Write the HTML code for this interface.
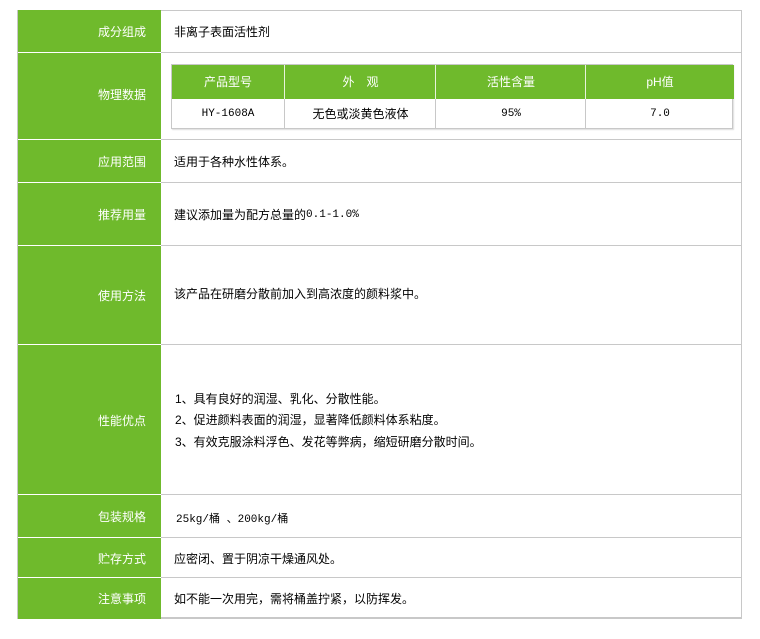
<!DOCTYPE html>
<html><head><meta charset="utf-8"><style>
body{margin:0;background:#fff;width:760px;height:639px;position:relative;font-family:"Liberation Sans","Noto Sans CJK SC",sans-serif;font-size:12px;color:#000;}
.outer{position:absolute;left:17px;top:10px;width:725px;height:609px;border:1px solid #c8c8c8;border-bottom:2px solid #c8c8c8;box-sizing:border-box;}
.row{position:absolute;left:17px;width:725px;border-top:1px solid #c8c8c8;box-sizing:border-box;}
.lab{position:absolute;left:1px;top:0;width:143px;bottom:0;background:#6fba2c;color:#fff;text-align:right;padding-right:15px;box-sizing:border-box;display:flex;align-items:center;justify-content:flex-end;border-top:1px solid #fff;margin-top:-1px;}
.val{position:absolute;left:157px;top:0;bottom:0;display:flex;align-items:center;}
.first .lab{border-top:none;margin-top:0}
.inner{position:absolute;left:171px;top:64px;width:562px;height:65px;border:1px solid #c8c8c8;box-sizing:border-box;box-shadow:1px 1px 1px #ddd;}
.inner div{position:absolute;text-align:center;}
.h{background:#6fba2c;color:#fff;top:0;height:34px;line-height:34px;}
.d{top:34px;height:30px;line-height:30px;font-family:"Liberation Mono","Noto Sans CJK SC",monospace;font-size:11px;}
.sep{border-left:1px solid #c8c8c8;}
.hs{border-left:1px solid #e8f3dc;}
</style></head><body>
<div class="outer"></div>
<div class="row first" style="top:10px;height:43px;border-top:none"><div class="lab">成分组成</div><div class="val">非离子表面活性剂</div></div>
<div class="row" style="top:52px;height:87px"><div class="lab" style="padding-bottom:4px">物理数据</div></div>
<div class="inner">
<div class="h" style="left:0;width:112px">产品型号</div>
<div class="h hs" style="left:112px;width:151px">外　观</div>
<div class="h hs" style="left:263px;width:150px">活性含量</div>
<div class="h hs" style="left:413px;width:148px">pH值</div>
<div class="d" style="left:0;width:112px">HY-1608A</div>
<div class="d sep" style="left:112px;width:151px;font-family:'Liberation Sans','Noto Sans CJK SC',sans-serif;font-size:12px">无色或淡黄色液体</div>
<div class="d sep" style="left:263px;width:150px">95%</div>
<div class="d sep" style="left:413px;width:148px">7.0</div>
</div>
<div class="row" style="top:139px;height:44px"><div class="lab">应用范围</div><div class="val">适用于各种水性体系。</div></div>
<div class="row" style="top:182px;height:64px"><div class="lab">推荐用量</div><div class="val">建议添加量为配方总量的<span style="font-family:'Liberation Mono',monospace;font-size:11px">0.1-1.0%</span></div></div>
<div class="row" style="top:245px;height:100px"><div class="lab">使用方法</div><div class="val" style="bottom:4px">该产品在研磨分散前加入到高浓度的颜料浆中。</div></div>
<div class="row" style="top:344px;height:151px"><div class="lab">性能优点</div><div class="val" style="line-height:21.5px;left:158px;top:2px"><div>1、具有良好的润湿、乳化、分散性能。<br>2、促进颜料表面的润湿，显著降低颜料体系粘度。<br>3、有效克服涂料浮色、发花等弊病，缩短研磨分散时间。</div></div></div>
<div class="row" style="top:494px;height:43px"><div class="lab">包装规格</div><div class="val" style="top:4px;left:159px"><span style="font-family:'Liberation Mono','Noto Sans CJK SC',monospace;font-size:11px">25kg/桶 、200kg/桶</span></div></div>
<div class="row" style="top:537px;height:41px"><div class="lab">贮存方式</div><div class="val">应密闭、置于阴凉干燥通风处。</div></div>
<div class="row" style="top:577px;height:42px"><div class="lab">注意事项</div><div class="val">如不能一次用完，需将桶盖拧紧，以防挥发。</div></div>
</body></html>
